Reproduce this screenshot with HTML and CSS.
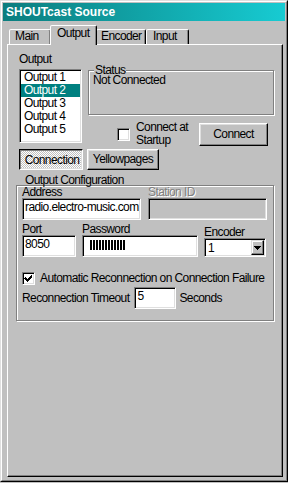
FILE: index.html
```html
<!DOCTYPE html>
<html lang="en">
<head>
    <meta charset="UTF-8">
    <meta name="viewport" content="width=device-width, initial-scale=1.0">
    <title>SHOUTcast Source</title>
    <link rel="stylesheet" href="styles.css">
</head>
<body>
    <div class="window">
        <div class="frame">
            <div class="titlebar">SHOUTcast Source</div>

            <div class="tabs">
                <div class="tab tab-main">Main</div>
                <div class="tab tab-output active">Output</div>
                <div class="tab tab-encoder">Encoder</div>
                <div class="tab tab-input">Input</div>
            </div>

            <div class="panel">
                <div class="top-section">
                    <div class="output-col">
                        <div class="caption">Output</div>
                        <ul class="listbox sunken">
                            <li>Output 1</li>
                            <li class="selected">Output 2</li>
                            <li>Output 3</li>
                            <li>Output 4</li>
                            <li>Output 5</li>
                        </ul>
                    </div>
                    <div class="status-col">
                        <div class="group status-group">
                            <span class="group-label">Status</span>
                            <div class="status-text">Not Connected</div>
                        </div>
                        <div class="connect-row">
                            <span class="checkbox sunken"></span>
                            <span class="check-label">Connect at<br>Startup</span>
                            <button class="btn connect-btn">Connect</button>
                        </div>
                    </div>
                </div>

                <div class="sub-tabs">
                    <button class="btn pressed conn-btn">Connection</button>
                    <button class="btn yp-btn">Yellowpages</button>
                </div>

                <div class="group config-group">
                    <span class="group-label">Output Configuration</span>

                    <div class="field-row">
                        <div class="field wide-field">
                            <label>Address</label>
                            <div class="edit sunken">radio.electro-music.com</div>
                        </div>
                        <div class="field wide-field">
                            <label class="disabled">Station ID</label>
                            <div class="edit sunken disabled-edit"></div>
                        </div>
                    </div>

                    <div class="field-row second-row">
                        <div class="field port-field">
                            <label>Port</label>
                            <div class="edit sunken">8050</div>
                        </div>
                        <div class="field password-field">
                            <label>Password</label>
                            <div class="edit sunken"><span class="mask"></span></div>
                        </div>
                        <div class="field encoder-field">
                            <label>Encoder</label>
                            <div class="combo sunken">
                                <span class="combo-value">1</span>
                                <span class="combo-arrow">
                                    <svg width="7" height="4" viewBox="0 0 7 4"><path d="M0 0h7v1h-1v1h-1v1h-1v1h-1v-1h-1v-1h-1v-1h-1z" fill="#000"/></svg>
                                </span>
                            </div>
                        </div>
                    </div>

                    <div class="auto-row">
                        <span class="checkbox sunken">
                            <svg width="9" height="9" viewBox="0 0 9 9"><path d="M1 3h1v1h1v1h1v-1h1v-1h1v-1h1v-1h1v3h-1v1h-1v1h-1v1h-1v1h-1v-1h-1v-1h-1v-1h-1z" fill="#000"/></svg>
                        </span>
                        <span>Automatic Reconnection on Connection Failure</span>
                    </div>

                    <div class="timeout-row">
                        <span>Reconnection Timeout</span>
                        <div class="edit sunken timeout-edit">5</div>
                        <span>Seconds</span>
                    </div>
                </div>
            </div>
        </div>
    </div>
</body>
</html>
```

FILE: styles.css
```css
:root {
    --face: #c0c0c0;
    --light: #dfdfdf;
    --shadow: #808080;
    --dark: #000000;
    --highlight: #008080;
}

* {
    box-sizing: border-box;
}

body {
    margin: 0;
    background: var(--face);
    font-family: 'Liberation Sans', Arial, sans-serif;
    font-size: 12px;
    line-height: 13px;
    letter-spacing: -0.6px;
    color: #000;
}

.window {
    width: 288px;
    height: 482px;
    border: 1px solid;
    border-color: var(--light) var(--dark) var(--dark) var(--light);
}

.frame {
    height: 100%;
    border: 1px solid;
    border-color: #fff var(--shadow) var(--shadow) #fff;
    padding: 1px;
    display: flex;
    flex-direction: column;
}

.titlebar {
    height: 18px;
    padding-left: 3px;
    background: linear-gradient(90deg, #0b7d7e, #17cbd2);
    color: #fff;
    font: bold 12px/18px 'Liberation Sans', Arial, sans-serif;
    letter-spacing: 0;
}

/* Tab strip */
.tabs {
    display: flex;
    align-items: flex-end;
    height: 19px;
    margin-top: 4px;
    padding-left: 6px;
}

.tab {
    height: 15px;
    border: 1px solid;
    border-bottom: none;
    border-color: #fff var(--dark) transparent #fff;
    border-radius: 2px 2px 0 0;
    box-shadow: inset -1px 0 0 var(--shadow);
    background: var(--face);
    padding-left: 6px;
    white-space: nowrap;
}

.tab-main {
    width: 42px;
    padding-left: 5px;
}

.tab-output {
    width: 47px;
}

.tab-encoder {
    width: 50px;
    padding-left: 4px;
}

.tab-input {
    width: 43px;
}

.tab.active {
    height: 20px;
    margin: 0 -1px -1px;
    padding-top: 1px;
    position: relative;
    z-index: 1;
}

.panel {
    flex: 1;
    margin: 0 2px 2px 4px;
    border: 1px solid;
    border-color: #fff var(--dark) var(--dark) #fff;
    box-shadow: inset -1px -1px 0 var(--shadow);
    padding: 8px 8px 0 8px;
}

/* 3D borders */
.sunken {
    border: 1px solid;
    border-color: var(--shadow) #fff #fff var(--shadow);
    box-shadow: inset 1px 1px 0 var(--dark), inset -1px -1px 0 var(--light);
}

.btn {
    font: inherit;
    letter-spacing: inherit;
    color: #000;
    padding: 0;
    background: var(--face);
    border: 1px solid;
    border-color: #fff var(--dark) var(--dark) #fff;
    box-shadow: inset -1px -1px 0 var(--shadow), inset 1px 1px 0 var(--light);
}

.btn.pressed {
    border-color: var(--dark) #fff #fff var(--dark);
    box-shadow: inset 1px 1px 0 var(--shadow), inset -1px -1px 0 var(--light);
    background: repeating-conic-gradient(#fff 0 25%, var(--face) 0 50%) 0 0 / 2px 2px;
    padding: 1px 0 0 2px;
}

/* Group boxes */
.group {
    display: flex;
    flex-direction: column;
    border: 1px solid var(--shadow);
    box-shadow: inset 1px 1px 0 #fff, 1px 1px 0 #fff;
}

.group-label {
    align-self: flex-start;
    padding: 0 1px;
    line-height: 10px;
    background: var(--face);
}

/* Top section */
.top-section {
    display: flex;
    gap: 6px;
    margin-left: 3px;
}

.output-col {
    width: 63px;
}

.listbox {
    list-style: none;
    margin: 3px 0 0;
    padding: 1px;
    height: 74px;
    background: #fff;
}

.listbox li {
    height: 13px;
    padding-left: 3px;
}

.listbox li.selected {
    background: var(--highlight);
    color: #fff;
}

.status-col {
    flex: 1;
}

.status-group {
    margin-top: 17px;
    height: 45px;
    padding: 0 4px;
}

.status-group .group-label {
    margin: -6px 0 0 1px;
}

.status-text {
    line-height: 11px;
}

.connect-row {
    display: flex;
    align-items: center;
    margin-top: 6px;
    padding-left: 29px;
}

.checkbox {
    width: 13px;
    height: 13px;
    flex: none;
    background: #fff;
    display: flex;
    align-items: center;
    justify-content: center;
}

.check-label {
    margin-left: 6px;
}

.connect-btn {
    width: 69px;
    height: 23px;
    margin-left: auto;
    margin-right: 6px;
}

.sub-tabs {
    display: flex;
    gap: 4px;
    margin: 2px 0 0 3px;
}

.conn-btn {
    width: 64px;
    height: 21px;
}

.yp-btn {
    width: 72px;
    height: 21px;
}

/* Output configuration */
.config-group {
    margin-top: 15px;
    padding: 0 6px 11px 5px;
}

.config-group .group-label {
    margin: -11px 0 2px 2px;
}

.field-row {
    display: flex;
    gap: 7px;
}

.second-row {
    margin-top: 4px;
    gap: 6px;
    align-items: flex-end;
}

.field label {
    display: block;
    line-height: 11px;
}

.field label.disabled {
    color: var(--shadow);
    text-shadow: 1px 1px 0 #fff;
}

.edit {
    height: 22px;
    padding: 2px 2px 0;
    background: #fff;
    white-space: nowrap;
    overflow: hidden;
}

.edit.disabled-edit {
    background: var(--face);
}

.wide-field {
    width: 119px;
}

.port-field {
    width: 54px;
}

.password-field {
    width: 116px;
}

.encoder-field {
    width: 62px;
}

.mask {
    display: block;
    width: 36px;
    height: 10px;
    margin: 2px 0 0 5px;
    background: repeating-linear-gradient(90deg, #000 0 2px, transparent 2px 3px);
}

.combo {
    height: 19px;
    padding: 1px;
    display: flex;
    justify-content: space-between;
    background: #fff;
}

.combo-value {
    padding: 2px 0 0 2px;
}

.combo-arrow {
    width: 13px;
    border: 1px solid;
    border-color: var(--light) var(--dark) var(--dark) var(--light);
    box-shadow: inset -1px -1px 0 var(--shadow), inset 1px 1px 0 #fff;
    background: var(--face);
    display: flex;
    align-items: center;
    justify-content: center;
}

.combo-arrow svg,
.checkbox svg {
    display: block;
    shape-rendering: crispEdges;
}

.auto-row {
    display: flex;
    align-items: center;
    gap: 5px;
    margin-top: 15px;
}

.timeout-row {
    display: flex;
    align-items: center;
    margin-top: 2px;
}

.timeout-edit {
    width: 42px;
    margin: 0 3px 0 5px;
    padding-left: 2px;
}
```
